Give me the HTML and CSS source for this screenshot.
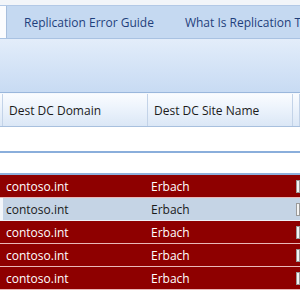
FILE: index.html
```html
<!DOCTYPE html>
<html lang="en">
<head>
    <meta charset="UTF-8">
    <title>Replication Status</title>
    <link rel="stylesheet" href="styles.css">
</head>
<body>
    <div class="topstrip"></div>

    <div class="tabs">
        <div class="tab active"></div>
        <div class="tab">Replication Error Guide</div>
        <div class="tab">What Is Replication Topology</div>
    </div>

    <div class="ribbon"></div>

    <div class="grid-head">
        <div class="cell lead"></div>
        <div class="cell">Dest DC Domain</div>
        <div class="cell">Dest DC Site Name</div>
        <div class="cell"></div>
    </div>

    <div class="group-bar"></div>

    <div class="rows">
        <div class="row error">
            <div class="cell lead"></div>
            <div class="cell">contoso.int</div>
            <div class="cell">Erbach</div>
            <div class="cell"><span class="check"></span></div>
        </div>
        <div class="row selected">
            <div class="cell lead"></div>
            <div class="cell">contoso.int</div>
            <div class="cell">Erbach</div>
            <div class="cell"><span class="check"></span></div>
        </div>
        <div class="row error">
            <div class="cell lead"></div>
            <div class="cell">contoso.int</div>
            <div class="cell">Erbach</div>
            <div class="cell"><span class="check"></span></div>
        </div>
        <div class="row error">
            <div class="cell lead"></div>
            <div class="cell">contoso.int</div>
            <div class="cell">Erbach</div>
            <div class="cell"><span class="check"></span></div>
        </div>
        <div class="row error">
            <div class="cell lead"></div>
            <div class="cell">contoso.int</div>
            <div class="cell">Erbach</div>
            <div class="cell"><span class="check"></span></div>
        </div>
    </div>
</body>
</html>
```

FILE: styles.css
```css
body {
    margin: 0;
    width: 300px;
    height: 300px;
    overflow: hidden;
    background-color: #fff;
    font-family: "Open Sans", "Noto Sans", Arial, sans-serif;
    font-size: 12px;
}

.topstrip {
    height: 5px;
    background-color: #f2f5f9;
}

/* barre des onglets */
.tabs {
    display: flex;
    height: 32px;
    background-color: #c5d9f1;
    border-top: 1px solid #b3c9e6;
    white-space: nowrap;
    overflow: hidden;
}

.tab {
    display: flex;
    flex-shrink: 0;
    align-items: center;
    padding: 0 14px 0 17px;
    color: #1f3f7c;
    font-size: 12px;
}

.tab.active {
    width: 6px;
    padding: 0;
    background-color: #fbfcfe;
    border-right: 1px solid #a7bedc;
}

.ribbon {
    height: 53px;
    border-top: 1px solid #a9c2e2;
    border-bottom: 1px solid #9ab7dc;
    background: linear-gradient(#e3edfa, #d2e2f6 60%, #c8dbf3);
}

.grid-head,
.row {
    display: grid;
    grid-template-columns: 3px 145px 145px 7px;
}

.grid-head {
    height: 32px;
    border-top: 1px solid #f4f8fd;
    border-bottom: 1px solid #a8c0de;
    background: linear-gradient(#fafcff, #e9f1fb 55%, #dbe7f6);
    color: #1b1b1b;
}

.grid-head .cell {
    display: flex;
    align-items: center;
    padding-left: 6px;
    border-right: 1px solid #c3d3e8;
    white-space: nowrap;
    overflow: hidden;
}

.grid-head .cell.lead {
    padding: 0;
}

.group-bar {
    height: 2px;
    margin-top: 24px;
    background-color: #8aaedb;
}

.rows {
    margin-top: 20px;
    border-top: 2px solid #8fb0dc;
}

.row {
    height: 22px;
    border-bottom: 1px solid #e9b7b7;
}

.row .cell {
    display: flex;
    align-items: center;
    padding-left: 3px;
    white-space: nowrap;
    overflow: hidden;
}

.row .cell.lead {
    padding: 0;
}

.row.error {
    background-color: #8e0000;
    color: #fff;
}

.row.selected {
    background-color: #c5d4e5;
    color: #1a1a1a;
    border-bottom-color: #eef2f7;
}

.row.selected .cell.lead {
    background-color: #f3f6fa;
}

.check {
    display: block;
    width: 10px;
    height: 11px;
    background-color: #f4f4f4;
    border: 1px solid #9a9a9a;
}
```
